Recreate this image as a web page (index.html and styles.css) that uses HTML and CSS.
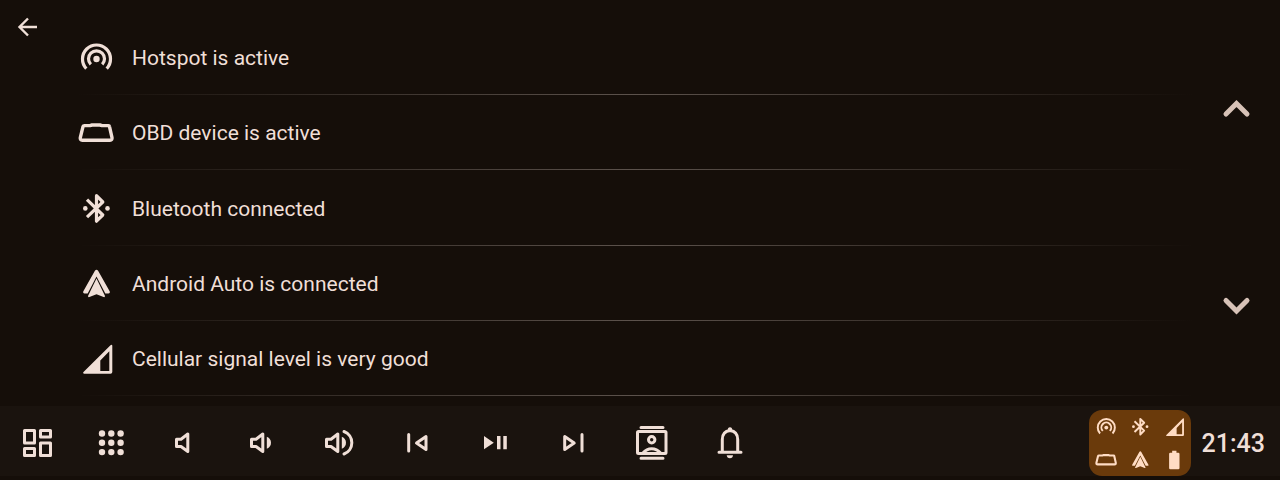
FILE: index.html
```
<!DOCTYPE html>
<html lang="en">
<head>
    <meta charset="UTF-8">
    <meta name="viewport" content="width=device-width, initial-scale=1.0">
    <title>Status</title>
    <link rel="stylesheet" href="styles.css">
</head>
<body>
    <!-- shared status icons -->
    <svg class="symbols" aria-hidden="true">
        <symbol id="hotspot" viewBox="0 0 36 36">
            <g fill="none" stroke="currentColor" stroke-width="3.2">
                <path d="M8.3 28.6A14 14 0 1 1 28.7 28.6"/>
                <path d="M12.8 24.4A8 8 0 1 1 24.2 24.4"/>
            </g>
            <circle cx="18.5" cy="19" r="3.2"/>
        </symbol>
        <symbol id="obd" viewBox="0 0 36 36">
            <path fill="none" stroke="currentColor" stroke-width="3.4" stroke-linejoin="round" d="M6.5 10.6H12L14 10H22L24 10.6H30.5Q31.3 10.6 31.5 11.6L34 22.6Q34.4 25.2 32 25.2H4.3Q1.9 25.2 2.3 22.6L5 11.6Q5.3 10.6 6.5 10.6Z"/>
        </symbol>
        <symbol id="bluetooth" viewBox="0 0 36 36">
            <path fill="none" stroke="currentColor" stroke-width="3.2" stroke-linejoin="round" d="M9 8.7L24.8 24L18.5 30.2V4.7L24.8 11L9 26.2"/>
            <circle cx="7.3" cy="17.4" r="2.3"/>
            <circle cx="29.5" cy="17.4" r="2.3"/>
        </symbol>
        <symbol id="auto" viewBox="0 0 36 36">
            <path d="M16.9 4.8Q18.5 2.6 20.1 4.8L31.8 25.6Q32.3 27.6 30.5 27.6H27.3L18.5 10.6L9.7 27.6H6.5Q4.7 27.6 5.2 25.6Z"/>
            <path d="M18.5 12.6L27 30.1Q27 31.6 25.6 31.1L18.5 28.3L11.4 31.1Q10 31.6 10 30.1Z"/>
        </symbol>
        <symbol id="signal" viewBox="0 0 36 36">
            <path fill-rule="evenodd" d="M5.500 31L32.500 4.200Q34.300 3 34.300 5V31Q34.300 32.800 32.500 32.800H6Q4.300 32.300 5.500 31ZM22.300 19.500V30H31.300V10.200Z"/>
        </symbol>
        <symbol id="battery" viewBox="0 0 36 36">
            <path d="M15 3H22V6H25Q27 6 27 8V31Q27 33 25 33H12Q10 33 10 31V8Q10 6 12 6H15Z"/>
        </symbol>
    </svg>

    <main class="content">
        <div class="back-column">
            <button class="back" aria-label="Back">
                <svg viewBox="0 0 24 24"><path d="M21 12H4M12 3.5L3.5 12L12 20.5"/></svg>
            </button>
        </div>
        <ul class="status-list">
            <li><svg class="icon"><use href="#hotspot"/></svg>Hotspot is active</li>
            <li><svg class="icon"><use href="#obd"/></svg>OBD device is active</li>
            <li><svg class="icon"><use href="#bluetooth"/></svg>Bluetooth connected</li>
            <li><svg class="icon"><use href="#auto"/></svg>Android Auto is connected</li>
            <li><svg class="icon"><use href="#signal"/></svg>Cellular signal level is very good</li>
        </ul>
        <div class="scroll-column">
            <button class="scroll" aria-label="Scroll up">
                <svg viewBox="0 0 36 36"><path d="M8 23L18.5 12.5L29 23"/></svg>
            </button>
            <button class="scroll" aria-label="Scroll down">
                <svg viewBox="0 0 36 36"><path d="M8 12.5L18.5 23L29 12.5"/></svg>
            </button>
        </div>
    </main>

    <footer class="bar">
        <nav class="views">
            <button aria-label="Dashboard">
                <svg class="icon line" viewBox="0 0 36 36">
                    <rect x="5.5" y="5.5" width="10" height="12.5"/>
                    <rect x="21.5" y="5.5" width="10" height="6.5"/>
                    <rect x="5.5" y="23.5" width="10" height="7"/>
                    <rect x="21.5" y="18" width="10" height="12.5"/>
                </svg>
            </button>
            <button aria-label="Apps">
                <svg class="icon" viewBox="0 0 36 36">
                    <circle cx="9" cy="8.5" r="3.2"/><circle cx="18.3" cy="8.5" r="3.2"/><circle cx="27.6" cy="8.5" r="3.2"/>
                    <circle cx="9" cy="17.8" r="3.2"/><circle cx="18.3" cy="17.8" r="3.2"/><circle cx="27.6" cy="17.8" r="3.2"/>
                    <circle cx="9" cy="27.1" r="3.2"/><circle cx="18.3" cy="27.1" r="3.2"/><circle cx="27.6" cy="27.1" r="3.2"/>
                </svg>
            </button>
        </nav>
        <div class="media">
            <button aria-label="Mute">
                <svg class="icon line" viewBox="0 0 36 36"><path d="M11.5 14.2H16L22.8 9V26.5L16 21.5H11.5Z"/></svg>
            </button>
            <button aria-label="Volume down">
                <svg class="icon line" viewBox="0 0 36 36">
                    <path d="M8.5 14.2H13L19.8 9V26.5L13 21.5H8.5Z"/>
                    <path class="solid" d="M23.8 11.7Q28 13.5 28 17.7T23.8 23.7Z"/>
                </svg>
            </button>
            <button aria-label="Volume up">
                <svg class="icon line" viewBox="0 0 36 36">
                    <path d="M5.5 14.2H10L16.8 9V26.5L10 21.5H5.5Z"/>
                    <path class="solid" d="M20.8 11.7Q25 13.5 25 17.7T20.8 23.7Z"/>
                    <path d="M23 6.500A12 12 0 0 1 23 29"/>
                </svg>
            </button>
            <button aria-label="Previous">
                <svg class="icon line" viewBox="0 0 36 36"><path d="M9.7 9.5V26M27 11.5V24.5L17.5 18Z"/></svg>
            </button>
            <button aria-label="Play or pause">
                <svg class="icon" viewBox="0 0 36 36"><path d="M7 11L16.8 17.7L7 24.3ZM20 11H23.5V24.3H20ZM26.3 11H29.8V24.3H26.3Z"/></svg>
            </button>
            <button aria-label="Next">
                <svg class="icon line" viewBox="0 0 36 36"><path d="M27 9.5V26M9.7 11.5V24.5L19.2 18Z"/></svg>
            </button>
            <button aria-label="Contacts">
                <svg class="icon line" viewBox="0 0 36 36">
                    <path d="M8 2.5H30M8 33.2H30"/>
                    <rect x="4.5" y="6.5" width="28.5" height="22" rx="1"/>
                    <circle cx="18.7" cy="14.7" r="3.2"/>
                    <path d="M10 28Q13.5 23.8 18.7 23.8T27.5 28"/>
                </svg>
            </button>
            <button aria-label="Notifications">
                <svg class="icon line" viewBox="0 0 36 36">
                    <path d="M8 27.2H30M11.3 27V14.5Q11.3 6.5 19 5.5Q26.7 6.5 26.7 14.5V27"/>
                    <path class="solid" d="M16.7 5.5Q16.7 2.2 19 2.2T21.3 5.5ZM15.7 30.2H22Q21.8 33.2 18.9 33.2T15.7 30.2Z"/>
                </svg>
            </button>
        </div>
        <button class="status-button" aria-label="Status">
            <svg><use href="#hotspot"/></svg>
            <svg><use href="#bluetooth"/></svg>
            <svg><use href="#signal"/></svg>
            <svg><use href="#obd"/></svg>
            <svg><use href="#auto"/></svg>
            <svg><use href="#battery"/></svg>
        </button>
        <time class="clock">21:43</time>
    </footer>
</body>
</html>
```
FILE: styles.css
```
* {
    box-sizing: border-box;
}

body {
    display: flex;
    flex-direction: column;
    height: 100vh;
    margin: 0;
    padding-bottom: 4px;
    background-color: #150e09;
    color: #f0dfd7;
    font-family: Roboto, sans-serif;
}

button {
    padding: 0;
    border: none;
    background: none;
    color: inherit;
    cursor: pointer;
}

svg {
    display: block;
    fill: currentColor;
}

.symbols {
    position: absolute;
    width: 0;
    height: 0;
}

.icon {
    width: 36px;
    height: 36px;
}

.line {
    fill: none;
    stroke: currentColor;
    stroke-width: 3;
    stroke-linecap: round;
    stroke-linejoin: round;
}

.solid {
    fill: currentColor;
    stroke: none;
}

.content {
    display: flex;
    flex: 1;
    min-height: 0;
}

.back-column {
    width: 78px;
}

.back {
    padding: 15px 16px;
}

.back svg {
    width: 24px;
    height: 24px;
    fill: none;
    stroke: currentColor;
    stroke-width: 2.4;
}

.status-list {
    display: flex;
    flex: 1;
    flex-direction: column;
    margin: 0;
    padding: 20px 0 10px;
    list-style: none;
    font-size: 21px;
}

.status-list li {
    display: flex;
    flex: 1;
    align-items: center;
    gap: 18px;
    padding-top: 2px;
    border-bottom: 1px solid;
    border-image: linear-gradient(to right, transparent, #5c524c, transparent) 1;
}

.scroll-column {
    display: flex;
    flex-direction: column;
    width: 88px;
    padding: 10px 0 2px;
    color: #d7c2b7;
}

.scroll {
    display: flex;
    flex: 1;
    align-items: center;
    justify-content: center;
}

.scroll svg {
    width: 36px;
    height: 36px;
    fill: none;
    stroke: currentColor;
    stroke-width: 5;
    stroke-linecap: round;
}

.bar {
    display: flex;
    height: 70px;
    padding: 4px 15px 0 5px;
    background-color: #1a130e;
}

.views,
.media {
    display: flex;
}

.views {
    gap: 10px;
    margin-right: 8px;
}

.media {
    gap: 14px;
}

.views button,
.media button {
    display: flex;
    align-items: center;
    justify-content: center;
    width: 64px;
}

.status-button {
    display: grid;
    grid-template-columns: repeat(3, 1fr);
    place-items: center;
    width: 102px;
    margin-left: auto;
    border-radius: 13px;
    background-color: #6a3a0b;
    color: #ffdcc4;
}

.status-button svg {
    width: 22px;
    height: 22px;
}

.clock {
    align-self: center;
    margin-left: 11px;
    font-size: 25px;
    font-weight: 500;
}
```
